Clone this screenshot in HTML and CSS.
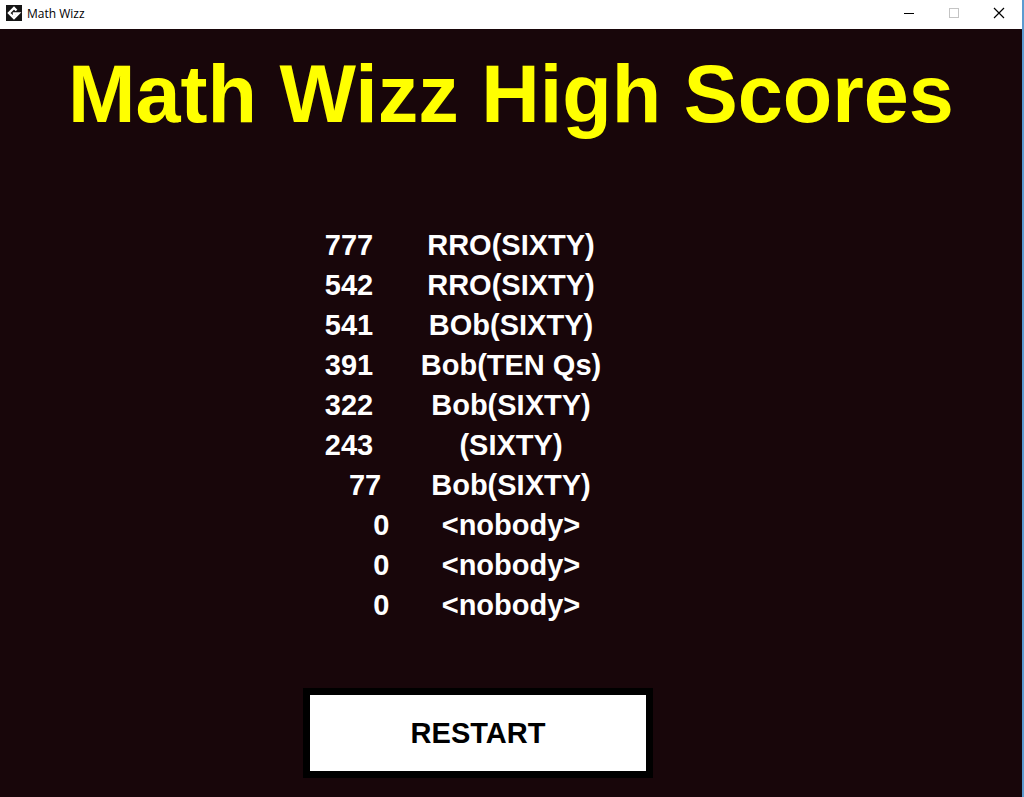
FILE: index.html
```html
<!DOCTYPE html>
<html lang="en">
<head>
  <meta charset="UTF-8">
  <title>Math Wizz</title>
  <link rel="stylesheet" href="styles.css">
</head>
<body>

  <div class="window">
    <header class="titlebar">
      <svg class="app-icon" viewBox="0 0 16 16" aria-hidden="true">
        <rect width="16" height="16" fill="#151515"/>
        <path d="M10.500 5.500L8 3L3 8L8 13L12.500 8.500H8V11" fill="none" stroke="#fff" stroke-width="2.400"/>
      </svg>
      <span class="app-name">Math Wizz</span>
      <div class="controls">
        <button type="button" aria-label="Minimize">
          <svg viewBox="0 0 12 12"><path d="M1 6.500H11" stroke="#000"/></svg>
        </button>
        <button type="button" aria-label="Maximize" disabled>
          <svg viewBox="0 0 12 12"><rect x="1.500" y="1.500" width="9" height="9" fill="none" stroke="#c4c4c4"/></svg>
        </button>
        <button type="button" aria-label="Close">
          <svg viewBox="0 0 12 12"><path d="M1 1L11 11M11 1L1 11" stroke="#000" stroke-width="1.200"/></svg>
        </button>
      </div>
    </header>

    <main class="game">
      <h1>Math Wizz High Scores</h1>

      <div class="scores">
        <table>
          <tbody>
            <tr><td class="score">777</td><td class="name">RRO(SIXTY)</td></tr>
            <tr><td class="score">542</td><td class="name">RRO(SIXTY)</td></tr>
            <tr><td class="score">541</td><td class="name">BOb(SIXTY)</td></tr>
            <tr><td class="score">391</td><td class="name">Bob(TEN Qs)</td></tr>
            <tr><td class="score">322</td><td class="name">Bob(SIXTY)</td></tr>
            <tr><td class="score">243</td><td class="name">(SIXTY)</td></tr>
            <tr><td class="score">    77</td><td class="name">Bob(SIXTY)</td></tr>
            <tr><td class="score">        0</td><td class="name">&lt;nobody&gt;</td></tr>
            <tr><td class="score">        0</td><td class="name">&lt;nobody&gt;</td></tr>
            <tr><td class="score">        0</td><td class="name">&lt;nobody&gt;</td></tr>
          </tbody>
        </table>
      </div>

      <div class="actions">
        <button type="button" class="restart">RESTART</button>
      </div>
    </main>
  </div>

</body>
</html>
```
FILE: styles.css
```css
* {
  box-sizing: border-box;
}
body {
  margin: 0;
  background-color: #18060a;
  font-family: "Arial Rounded MT Bold", "Liberation Sans", Arial, sans-serif;
}
.window {
  display: flex;
  flex-direction: column;
  min-height: 100vh;
  border-right: 2px solid #5b9bd0;
}
.titlebar {
  display: flex;
  align-items: center;
  height: 29px;
  padding: 0 1px 3px 6px;
  background-color: #fff;
}
.app-icon {
  width: 16px;
  height: 16px;
  margin-right: 5px;
}
.app-name {
  font-family: "Segoe UI", "Open Sans", sans-serif;
  font-size: 12px;
  color: #000;
}
.controls {
  display: flex;
  margin-left: auto;
}
.controls button {
  display: flex;
  align-items: center;
  justify-content: center;
  width: 45px;
  height: 26px;
  padding: 0;
  border: none;
  background: none;
}
.controls svg {
  width: 12px;
  height: 12px;
}
.game {
  flex: 1;
  background-color: #18060a;
  color: #fff;
}
h1 {
  margin: 0;
  padding-top: 19px;
  font-size: 81px;
  line-height: 92px;
  text-align: center;
  color: #ff0;
}
.scores {
  display: flex;
  justify-content: center;
  padding: 85px 108px 0 0;
}
table {
  border-collapse: collapse;
  font-size: 29px;
  font-weight: bold;
}
td {
  height: 40px;
  padding: 0;
  line-height: 40px;
  text-align: center;
}
.score {
  width: 108px;
  white-space: pre;
}
.name {
  width: 216px;
}
.actions {
  display: flex;
  justify-content: center;
  padding: 63px 66px 19px 0;
}
.restart {
  width: 350px;
  height: 90px;
  padding: 0;
  border: 7px solid #000;
  background-color: #fff;
  color: #000;
  font-family: inherit;
  font-size: 29px;
  font-weight: bold;
}
```
